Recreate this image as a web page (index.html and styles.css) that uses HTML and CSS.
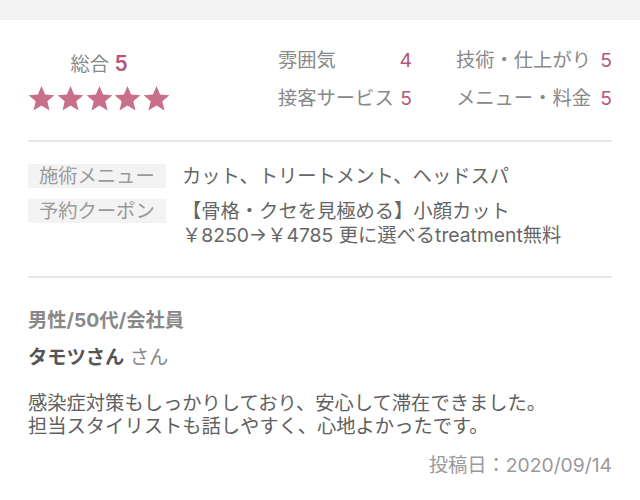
FILE: index.html
```html
<!DOCTYPE html>
<html lang="ja">
<head>
<meta charset="utf-8">
<link rel="stylesheet" href="styles.css">
</head>
<body>
<div class="topbar"></div>
<main class="review">
  <section class="ratings">
    <div class="overall">
      <div class="overall-score"><span class="label">総合</span> <span class="num big">5</span></div>
      <div class="stars">
        <svg class="star" viewBox="0 0 24 24"><polygon points="12,0.8 15.2,8.4 23.4,9.1 17.2,14.5 19.1,22.6 12,18.3 4.9,22.6 6.8,14.5 0.6,9.1 8.8,8.4"/></svg>
        <svg class="star" viewBox="0 0 24 24"><polygon points="12,0.8 15.2,8.4 23.4,9.1 17.2,14.5 19.1,22.6 12,18.3 4.9,22.6 6.8,14.5 0.6,9.1 8.8,8.4"/></svg>
        <svg class="star" viewBox="0 0 24 24"><polygon points="12,0.8 15.2,8.4 23.4,9.1 17.2,14.5 19.1,22.6 12,18.3 4.9,22.6 6.8,14.5 0.6,9.1 8.8,8.4"/></svg>
        <svg class="star" viewBox="0 0 24 24"><polygon points="12,0.8 15.2,8.4 23.4,9.1 17.2,14.5 19.1,22.6 12,18.3 4.9,22.6 6.8,14.5 0.6,9.1 8.8,8.4"/></svg>
        <svg class="star" viewBox="0 0 24 24"><polygon points="12,0.8 15.2,8.4 23.4,9.1 17.2,14.5 19.1,22.6 12,18.3 4.9,22.6 6.8,14.5 0.6,9.1 8.8,8.4"/></svg>
      </div>
    </div>
    <div class="details">
      <div class="item"><span class="label">雰囲気</span><span class="num">4</span></div>
      <div class="item"><span class="label">技術・仕上がり</span><span class="num">5</span></div>
      <div class="item"><span class="label">接客サービス</span><span class="num">5</span></div>
      <div class="item"><span class="label">メニュー・料金</span><span class="num">5</span></div>
    </div>
  </section>
  <section class="info">
    <div class="row">
      <div class="tag">施術メニュー</div>
      <div class="value">カット、トリートメント、ヘッドスパ</div>
    </div>
    <div class="row">
      <div class="tag">予約クーポン</div>
      <div class="value">【骨格・クセを見極める】小顔カット<br>￥8250→￥4785 更に選べるtreatment無料</div>
    </div>
  </section>
  <section class="post">
    <div class="profile">男性/50代/会社員</div>
    <div class="name"><span class="nick">タモツさん</span> <span class="honor">さん</span></div>
    <p class="body">感染症対策もしっかりしており、安心して滞在できました。<br>担当スタイリストも話しやすく、心地よかったです。</p>
    <div class="date">投稿日：2020/09/14</div>
  </section>
</main>
</body>
</html>
```
FILE: styles.css
```css
* { box-sizing: border-box; }
body {
  margin: 0;
  background: #fff;
  font-family: "Inter", "Noto Sans CJK JP", sans-serif;
  font-size: 19.3px;
  color: #666;
}
.topbar {
  height: 20px;
  background: #f3f3f3;
}
.review {
  padding: 0 28px;
}
.ratings {
  display: flex;
  height: 122px;
  padding-top: 28px;
  border-bottom: 2px solid #e6e6e6;
}
.overall {
  width: 142px;
  padding-top: 4px;
  text-align: center;
}
.overall-score {
  line-height: 24px;
}
.label {
  color: #888;
}
.num {
  color: #b5557a;
}
.num.big {
  font-size: 21px;
  font-weight: 600;
}
.stars {
  display: flex;
  gap: 1.75px;
  margin-top: 9px;
}
.star {
  width: 27px;
  height: 27px;
  fill: #c86f8a;
}
.details {
  margin-left: 108px;
  display: grid;
  grid-template-columns: 134px 156px;
  column-gap: 44px;
  row-gap: 14px;
  align-content: start;
}
.item {
  display: flex;
  justify-content: space-between;
  line-height: 24px;
}
.info {
  padding: 22px 0 29px;
  border-bottom: 2px solid #e6e6e6;
  display: flex;
  flex-direction: column;
  gap: 11px;
}
.row {
  display: grid;
  grid-template-columns: 138px 1fr;
  column-gap: 16px;
  line-height: 24px;
}
.tag {
  background: #f3f3f3;
  color: #999;
  padding: 0 11px;
  white-space: nowrap;
  align-self: start;
}
.value {
  color: #666;
}
.post {
  padding-top: 30px;
}
.profile {
  color: #888;
  font-weight: bold;
  line-height: 24px;
}
.name {
  margin-top: 13px;
  line-height: 24px;
}
.nick {
  font-weight: bold;
  color: #555;
}
.honor {
  color: #888;
}
.body {
  margin: 23px 0 0;
  line-height: 23px;
  color: #606060;
}
.date {
  margin-top: 15px;
  text-align: right;
  color: #999;
  line-height: 24px;
}
```
